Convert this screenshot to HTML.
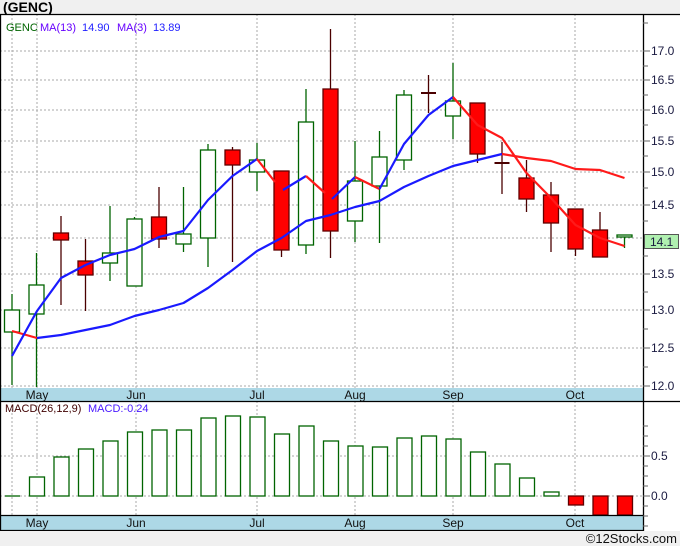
<!DOCTYPE html>
<html><head><meta charset="utf-8"><style>
html,body{margin:0;padding:0;background:#f0f0f0;}
svg{display:block;font-family:"Liberation Sans",sans-serif;}
</style></head><body>
<svg width="680" height="546" viewBox="0 0 680 546" xmlns="http://www.w3.org/2000/svg">
<rect x="0" y="0" width="680" height="546" fill="#f0f0f0"/>
<text x="3" y="12" font-size="14" font-weight="bold" fill="#000">(GENC)</text>
<rect x="0" y="14" width="680" height="517" fill="#fff"/>
<!-- grid main -->
<g stroke="#aaa" stroke-width="1" stroke-dasharray="2,2">
<line x1="0" y1="51" x2="643" y2="51"/><line x1="0" y1="80" x2="643" y2="80"/><line x1="0" y1="110" x2="643" y2="110"/><line x1="0" y1="141" x2="643" y2="141"/><line x1="0" y1="172" x2="643" y2="172"/><line x1="0" y1="205" x2="643" y2="205"/><line x1="0" y1="238" x2="643" y2="238"/><line x1="0" y1="274" x2="643" y2="274"/><line x1="0" y1="310" x2="643" y2="310"/><line x1="0" y1="348" x2="643" y2="348"/><line x1="0" y1="386" x2="643" y2="386"/>
<line x1="12" y1="14" x2="12" y2="388"/><line x1="37" y1="14" x2="37" y2="388"/><line x1="136" y1="14" x2="136" y2="388"/><line x1="257" y1="14" x2="257" y2="388"/><line x1="355" y1="14" x2="355" y2="388"/><line x1="453" y1="14" x2="453" y2="388"/><line x1="575" y1="14" x2="575" y2="388"/>
<line x1="12" y1="401" x2="12" y2="516"/><line x1="37" y1="401" x2="37" y2="516"/><line x1="136" y1="401" x2="136" y2="516"/><line x1="257" y1="401" x2="257" y2="516"/><line x1="355" y1="401" x2="355" y2="516"/><line x1="453" y1="401" x2="453" y2="516"/><line x1="575" y1="401" x2="575" y2="516"/>
<line x1="0" y1="456" x2="643" y2="456"/><line x1="0" y1="496" x2="643" y2="496"/>
</g>
<text x="6" y="31" font-size="11" fill="#006400">GENC</text>
<text x="40" y="31" font-size="11" fill="#6600ff">MA(13)</text>
<text x="82" y="31" font-size="11" fill="#2020ff">14.90</text>
<text x="117" y="31" font-size="11" fill="#6600ff">MA(3)</text>
<text x="153" y="31" font-size="11" fill="#2020ff">13.89</text>
<!-- wicks -->
<g stroke-width="1.3">
<g stroke="#006400">
<line x1="12" y1="294" x2="12" y2="385"/><line x1="36.5" y1="253" x2="36.5" y2="387"/><line x1="110" y1="206" x2="110" y2="281"/><line x1="134.5" y1="217" x2="134.5" y2="286"/><line x1="183.5" y1="187" x2="183.5" y2="252"/><line x1="208" y1="144" x2="208" y2="267"/><line x1="257" y1="143" x2="257" y2="191"/><line x1="306" y1="89" x2="306" y2="254"/><line x1="355" y1="141" x2="355" y2="242"/><line x1="379.5" y1="131" x2="379.5" y2="243"/><line x1="404" y1="90" x2="404" y2="170"/><line x1="453" y1="63" x2="453" y2="139"/><line x1="624.5" y1="236" x2="624.5" y2="248"/>
</g>
<g stroke="#4a0000">
<line x1="61" y1="216" x2="61" y2="305"/><line x1="85.5" y1="239" x2="85.5" y2="311"/><line x1="159" y1="187" x2="159" y2="248"/><line x1="232.5" y1="147" x2="232.5" y2="262"/><line x1="281.5" y1="171" x2="281.5" y2="257"/><line x1="330.5" y1="29" x2="330.5" y2="258"/><line x1="428.5" y1="75" x2="428.5" y2="113"/><line x1="477.5" y1="103" x2="477.5" y2="163"/><line x1="502" y1="142" x2="502" y2="194"/><line x1="526.5" y1="160" x2="526.5" y2="212"/><line x1="551" y1="182" x2="551" y2="252"/><line x1="575.5" y1="209" x2="575.5" y2="256"/><line x1="600" y1="212" x2="600" y2="257"/>
<line x1="421" y1="93" x2="436" y2="93" stroke-width="2"/><line x1="494.5" y1="163" x2="509.5" y2="163" stroke-width="2"/>
</g>
</g>
<!-- bodies -->
<g fill="#fff" stroke="#006400" stroke-width="1.3">
<rect x="4.5" y="310" width="15" height="22"/><rect x="29" y="285" width="15" height="29"/><rect x="102.5" y="253" width="15" height="10"/><rect x="127" y="219" width="15" height="67"/><rect x="176" y="234" width="15" height="10"/><rect x="200.5" y="150" width="15" height="88"/><rect x="249.5" y="160" width="15" height="12"/><rect x="298.5" y="122" width="15" height="123"/><rect x="347.5" y="181" width="15" height="40"/><rect x="372" y="157" width="15" height="29"/><rect x="396.5" y="95" width="15" height="65"/><rect x="445.5" y="101" width="15" height="15"/><rect x="617" y="235" width="15" height="2"/>
</g>
<g fill="#ff0000" stroke="#600000" stroke-width="1.3">
<rect x="53.5" y="233" width="15" height="7"/><rect x="78" y="261" width="15" height="14"/><rect x="151.5" y="217" width="15" height="22"/><rect x="225" y="150" width="15" height="15"/><rect x="274" y="171" width="15" height="79"/><rect x="323" y="89" width="15" height="142"/><rect x="470" y="103" width="15" height="51"/><rect x="519" y="178" width="15" height="21"/><rect x="543.5" y="195" width="15" height="28"/><rect x="568" y="209" width="15" height="40"/><rect x="592.5" y="230" width="15" height="27"/>
</g>
<!-- MA13 -->
<g fill="none" stroke-width="2.2" stroke-linejoin="round">
<polyline stroke="#ff1a1a" points="12,331 37,338"/>
<polyline stroke="#1a1aff" points="37,338 61,335 85.5,330 110,325 134.5,316 159,310 183.5,303 208,288 232.5,270 257,251 281.5,238 306,221 330.5,215 355,207 379.5,201 404,187 428.5,176 453,166 477.5,160 502,154"/>
<polyline stroke="#ff1a1a" points="502,154 526.5,158 551,161 575.5,169 600,170 624.5,178"/>
<!-- MA3 -->
<polyline stroke="#1a1aff" points="12,356 37,311 61,278 85.5,265 110,255 134.5,249 159,237 183.5,231 208,200 232.5,176 257,159"/>
<polyline stroke="#ff1a1a" points="257,159 275,182"/>
<polyline stroke="#1a1aff" points="283,190 306,176"/>
<polyline stroke="#ff1a1a" points="306,176 325,193"/>
<polyline stroke="#1a1aff" points="332,199 355,177"/>
<polyline stroke="#ff1a1a" points="355,177 379.5,189"/>
<polyline stroke="#1a1aff" points="379.5,189 404,144 428.5,115 453,97"/>
<polyline stroke="#ff1a1a" points="453,97 477.5,125 502,138 526.5,173 551,198 575.5,225 600,238 624.5,246"/>
</g>
<!-- date band main -->
<rect x="0" y="388" width="643" height="13" fill="#add8e6"/>
<line x1="0" y1="401.5" x2="680" y2="401.5" stroke="#000" stroke-width="1.3"/>
<g font-size="12" fill="#111" text-anchor="middle">
<text x="37" y="399">May</text><text x="136" y="399">Jun</text><text x="257" y="399">Jul</text><text x="355" y="399">Aug</text><text x="453" y="399">Sep</text><text x="575" y="399">Oct</text>
</g>
<!-- MACD -->
<text x="5" y="412" font-size="11" fill="#400000">MACD(26,12,9)</text>
<text x="88" y="412" font-size="11" fill="#4a1aff">MACD:-0.24</text>
<g fill="#fff" stroke="#006400" stroke-width="1.3">
<line x1="5" y1="496" x2="20" y2="496"/>
<rect x="29.5" y="477" width="15" height="19"/><rect x="54" y="457" width="15" height="39"/><rect x="78.5" y="449" width="15" height="47"/><rect x="103" y="441" width="15" height="55"/><rect x="127.5" y="432" width="15" height="64"/><rect x="152" y="430" width="15" height="66"/><rect x="176.5" y="430" width="15" height="66"/><rect x="201" y="418" width="15" height="78"/><rect x="225.5" y="416" width="15" height="80"/><rect x="250" y="417" width="15" height="79"/><rect x="274.5" y="434" width="15" height="62"/><rect x="299" y="426" width="15" height="70"/><rect x="323.5" y="441" width="15" height="55"/><rect x="348" y="446" width="15" height="50"/><rect x="372.5" y="447" width="15" height="49"/><rect x="397" y="438" width="15" height="58"/><rect x="421.5" y="436" width="15" height="60"/><rect x="446" y="439" width="15" height="57"/><rect x="470.5" y="452" width="15" height="44"/><rect x="495" y="464" width="15" height="32"/><rect x="519.5" y="478" width="15" height="18"/><rect x="544" y="492" width="15" height="4"/>
</g>
<g fill="#ff0000" stroke="#600000" stroke-width="1.3">
<rect x="568.5" y="496" width="15" height="9"/><rect x="593" y="496" width="15" height="19"/><rect x="617.5" y="496" width="15" height="19"/>
</g>
<rect x="0" y="516" width="643" height="14" fill="#add8e6"/>
<line x1="0" y1="515.5" x2="643" y2="515.5" stroke="#000" stroke-width="1.3"/>
<line x1="0" y1="530.5" x2="643" y2="530.5" stroke="#000" stroke-width="1.3"/>
<g font-size="12" fill="#111" text-anchor="middle">
<text x="37" y="527">May</text><text x="136" y="527">Jun</text><text x="257" y="527">Jul</text><text x="355" y="527">Aug</text><text x="453" y="527">Sep</text><text x="575" y="527">Oct</text>
</g>
<!-- borders -->
<line x1="0" y1="14.5" x2="680" y2="14.5" stroke="#000" stroke-width="1.3"/>
<line x1="0.5" y1="14" x2="0.5" y2="531" stroke="#000" stroke-width="1.3"/>
<line x1="643.5" y1="14" x2="643.5" y2="531" stroke="#000" stroke-width="1.3"/>
<rect x="0" y="531" width="680" height="15" fill="#f0f0f0"/>
<!-- axis ticks -->
<g stroke="#666" stroke-width="1">
<line x1="643" y1="23" x2="648" y2="23"/><line x1="643" y1="51" x2="650" y2="51"/><line x1="643" y1="66" x2="648" y2="66"/><line x1="643" y1="80" x2="650" y2="80"/><line x1="643" y1="95" x2="648" y2="95"/><line x1="643" y1="110" x2="650" y2="110"/><line x1="643" y1="125" x2="648" y2="125"/><line x1="643" y1="141" x2="650" y2="141"/><line x1="643" y1="156" x2="648" y2="156"/><line x1="643" y1="172" x2="650" y2="172"/><line x1="643" y1="188" x2="648" y2="188"/><line x1="643" y1="205" x2="650" y2="205"/><line x1="643" y1="221" x2="648" y2="221"/><line x1="643" y1="256" x2="648" y2="256"/><line x1="643" y1="274" x2="650" y2="274"/><line x1="643" y1="292" x2="648" y2="292"/><line x1="643" y1="310" x2="650" y2="310"/><line x1="643" y1="329" x2="648" y2="329"/><line x1="643" y1="348" x2="650" y2="348"/><line x1="643" y1="367" x2="648" y2="367"/><line x1="643" y1="386" x2="650" y2="386"/>
<line x1="643" y1="426" x2="648" y2="426"/><line x1="643" y1="436" x2="648" y2="436"/><line x1="643" y1="446" x2="648" y2="446"/><line x1="643" y1="456" x2="650" y2="456"/><line x1="643" y1="466" x2="648" y2="466"/><line x1="643" y1="476" x2="648" y2="476"/><line x1="643" y1="486" x2="648" y2="486"/><line x1="643" y1="496" x2="650" y2="496"/><line x1="643" y1="506" x2="648" y2="506"/><line x1="643" y1="516" x2="648" y2="516"/><line x1="643" y1="526" x2="648" y2="526"/>
</g>
<g font-size="12" fill="#1a1a40">
<text x="651" y="55">17.0</text><text x="651" y="84">16.5</text><text x="651" y="114">16.0</text><text x="651" y="145">15.5</text><text x="651" y="176">15.0</text><text x="651" y="209">14.5</text><text x="651" y="278">13.5</text><text x="651" y="314">13.0</text><text x="651" y="352">12.5</text><text x="651" y="390">12.0</text>
<text x="651" y="460">0.5</text><text x="651" y="500">0.0</text>
</g>
<rect x="644.5" y="234.5" width="34" height="14" fill="#b0f0b0" stroke="#555" stroke-width="1"/>
<text x="650" y="246" font-size="12" fill="#1a1a40">14.1</text>
<text x="677" y="543" font-size="13" fill="#111" text-anchor="end">©12Stocks.com</text>
</svg>
</body></html>
